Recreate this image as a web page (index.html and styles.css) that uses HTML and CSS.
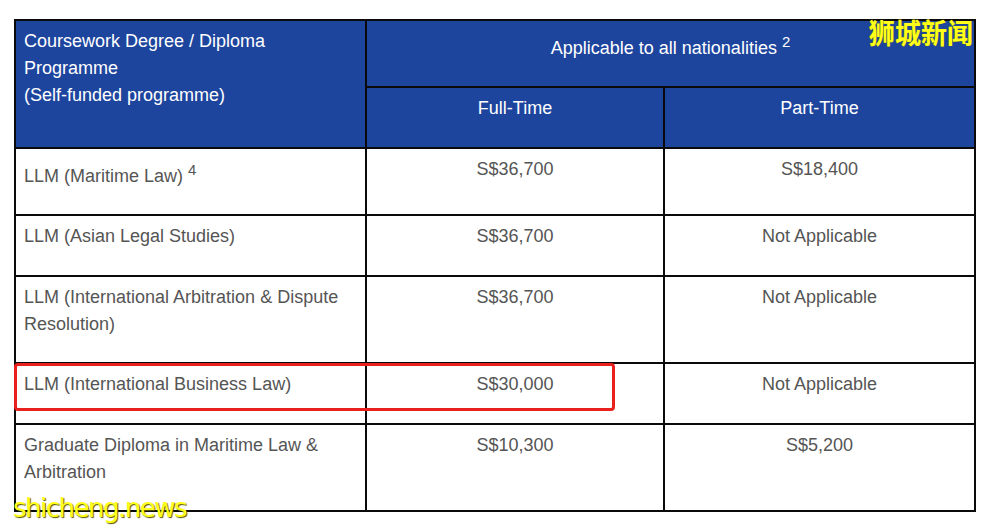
FILE: index.html
```html
<!DOCTYPE html>
<html>
<head>
<meta charset="utf-8">
<link rel="stylesheet" href="styles.css">
</head>
<body>
<div class="page">
  <table class="fees">
    <colgroup>
      <col class="c1"><col class="c2"><col class="c3">
    </colgroup>
    <thead>
      <tr class="h1">
        <th rowspan="2" class="left">Coursework Degree / Diploma Programme<br>(Self-funded programme)</th>
        <th colspan="2" class="nat">Applicable to all nationalities <sup>2</sup></th>
      </tr>
      <tr class="h2">
        <th>Full-Time</th>
        <th>Part-Time</th>
      </tr>
    </thead>
    <tbody>
      <tr class="r1"><td class="left">LLM (Maritime Law) <sup>4</sup></td><td>S$36,700</td><td>S$18,400</td></tr>
      <tr class="r2"><td class="left">LLM (Asian Legal Studies)</td><td>S$36,700</td><td>Not Applicable</td></tr>
      <tr class="r3"><td class="left">LLM (International Arbitration &amp; Dispute Resolution)</td><td>S$36,700</td><td>Not Applicable</td></tr>
      <tr class="r4"><td class="left">LLM (International Business Law)</td><td>S$30,000</td><td>Not Applicable</td></tr>
      <tr class="r5"><td class="left">Graduate Diploma in Maritime Law &amp; Arbitration</td><td>S$10,300</td><td>S$5,200</td></tr>
    </tbody>
  </table>
  <div class="highlight"></div>
  <div class="wm-cn">狮城新闻</div>
  <div class="wm-en">shicheng.news</div>
</div>
</body>
</html>
```
FILE: styles.css
```css
html, body {
  margin: 0;
  padding: 0;
  background: #ffffff;
}
.page {
  position: relative;
  width: 989px;
  height: 527px;
  overflow: hidden;
  padding: 19px 0 0 14px;
  box-sizing: border-box;
}
.fees {
  border-collapse: collapse;
  table-layout: fixed;
  width: 962px;
  font-family: "Liberation Sans", Arial, sans-serif;
  font-size: 18px;
  line-height: 27px;
}
.c1 { width: 351px; }
.c2 { width: 298px; }
.c3 { width: 311px; }
.fees th, .fees td {
  border: 2px solid #0a0a0a;
  vertical-align: top;
  text-align: center;
  padding: 7px 8px 5px 8px;
  font-weight: normal;
}
.fees th {
  background: #1d459e;
  color: #ffffff;
}
.fees td {
  color: #555555;
}
.fees .left {
  text-align: left;
}
.fees sup {
  font-size: 15px;
  line-height: 0;
  vertical-align: 7px;
}
.fees th.nat {
  padding-top: 14px;
}
.h1 { height: 67px; }
.h2 { height: 61px; }
.r1 { height: 67px; }
.r2 { height: 61px; }
.r3 { height: 87px; }
.r4 { height: 61px; }
.r5 { height: 87px; }
.r1 td.left { padding-top: 14px; }
.highlight {
  position: absolute;
  left: 14px;
  top: 363px;
  width: 595px;
  height: 42px;
  border: 3px solid #e8211f;
  border-radius: 4px;
}
.wm-cn {
  position: absolute;
  right: 16px;
  top: 15px;
  font-family: "Noto Sans CJK SC", sans-serif;
  font-weight: 700;
  font-size: 28px;
  line-height: 34px;
  color: #ffff1a;
  transform: scaleX(0.93);
  transform-origin: right center;
  text-shadow: 0 0 1px #6b6b00;
}
.wm-en {
  position: absolute;
  left: 13px;
  top: 492px;
  font-family: "DejaVu Sans", sans-serif;
  font-size: 26px;
  line-height: 32px;
  color: #ffff1a;
  letter-spacing: -1.5px;
  text-shadow: 1px 1px 1px #555500;
}
```
